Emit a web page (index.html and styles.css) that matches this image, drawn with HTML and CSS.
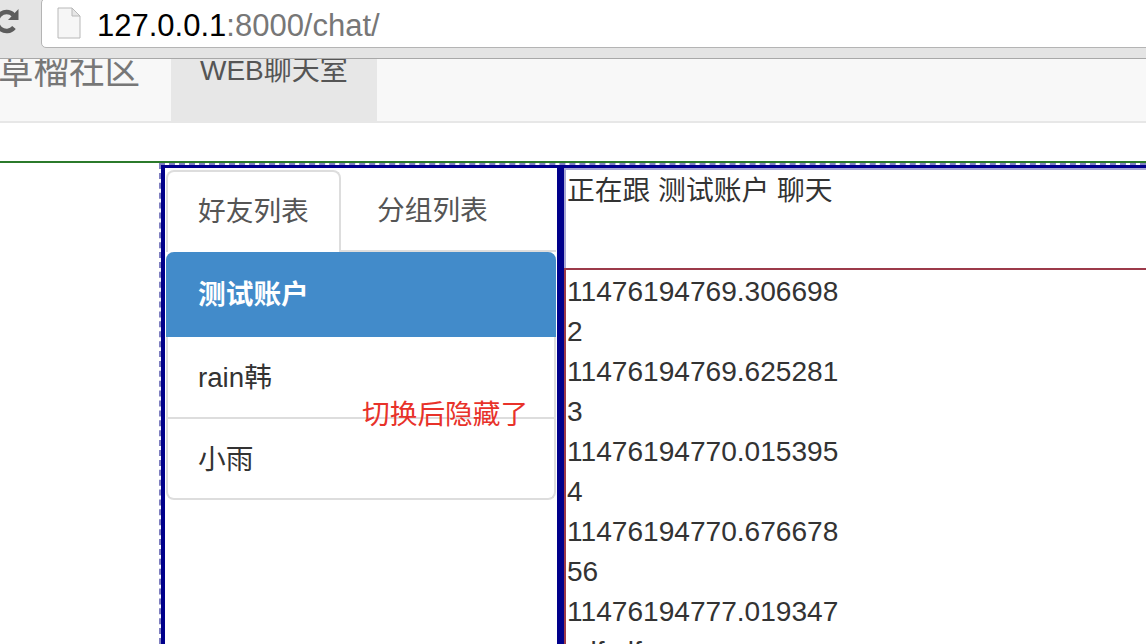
FILE: index.html
```html
<!DOCTYPE html>
<html lang="zh">
<head>
<meta charset="utf-8">
<title>chat</title>
<link rel="stylesheet" href="styles.css">
</head>
<body>
<div class="toolbar">
  <svg class="reload" width="24" height="30" viewBox="0 0 24 30"><path d="M17 21.5a9.5 9.5 0 1 1-.5-12.500" fill="none" stroke="#5c5c5c" stroke-width="4.500"/><path d="M11 14h10.500V3z" fill="#5c5c5c"/></svg>
  <div class="omnibox">
    <svg class="page" width="24" height="32" viewBox="0 0 24 32"><path d="M1 1h14l8 8v22H1z" fill="#f6f6f6" stroke="#b8b8b8"/><path d="M15 1v8h8z" fill="#e6e6e6" stroke="#b8b8b8"/></svg>
    <div class="url"><span class="host">127.0.0.1</span><span class="path">:8000/chat/</span></div>
  </div>
</div>
<nav class="navbar">
  <div class="brand">草榴社区</div>
  <div class="navitem">WEB聊天室</div>
</nav>
<div class="rule"></div>
<main class="chat">
  <aside class="left">
    <div class="tabs">
      <div class="tab active">好友列表</div>
      <div class="tab">分组列表</div>
    </div>
    <ul class="list">
      <li class="row current">测试账户</li>
      <li class="row">rain韩</li>
      <li class="row">小雨</li>
    </ul>
    <div class="note">切换后隐藏了</div>
  </aside>
  <section class="right">
    <div class="head">正在跟 测试账户 聊天</div>
    <div class="msgs">
      <div>11476194769.306698</div>
      <div>2</div>
      <div>11476194769.625281</div>
      <div>3</div>
      <div>11476194770.015395</div>
      <div>4</div>
      <div>11476194770.676678</div>
      <div>56</div>
      <div>11476194777.019347</div>
      <div>mlfmlf</div>
    </div>
  </section>
</main>
</body>
</html>
```
FILE: styles.css
```css
* { box-sizing: border-box; }
html, body { margin: 0; height: 644px; overflow: hidden; background: #fff; }
body { font-family: "Liberation Sans", "Noto Sans CJK SC", sans-serif; color: #333; }
.toolbar { height: 59px; background: #e4e4e4; border-bottom: 1px solid #a8a8a8; display: flex; align-items: flex-start; overflow: hidden; position: relative; z-index: 1; }
.reload { margin: 6px 20px 0 -3px; flex: none; }
.omnibox { width: 1200px; height: 50px; margin-top: -2px; background: #fff; border: 1px solid #b4b4b4; border-radius: 5px; display: flex; align-items: center; padding-left: 15px; font-size: 31px; flex: none; }
.page { margin-right: 16px; flex: none; }
.url { padding-top: 6px; }
.host { color: #000; }
.path { color: #777; }
.navbar { height: 64px; background: #f8f8f8; border-bottom: 2px solid #e7e7e7; display: flex; }
.brand { font-size: 35.500px; color: #777; margin-left: -2px; width: 173px; line-height: 26px; }
.navitem { width: 206px; background: #e7e7e7; color: #555; font-size: 28px; padding-left: 29px; line-height: 24px; }
.rule { height: 40px; border-bottom: 2px solid #2b7a2b; }
.chat { margin-left: 159px; height: 481px; border-top: 2px dashed #8080c0; border-left: 2px dashed #8080c0; display: flex; position: relative; }
.left { width: 403px; height: 100%; border: solid #00008b; border-width: 3px 7px 0 4px; padding: 2px 1px 0; flex: none; position: relative; }
.tabs { display: flex; height: 82px; border-bottom: 2px solid #ddd; }
.tab { width: 175px; font-size: 27.700px; line-height: 80px; padding-left: 30px; color: #555; }
.tab.active { border: 2px solid #ddd; border-bottom: 0; border-radius: 8px 8px 0 0; background: #fff; height: 82px; position: relative; }
.tab + .tab { width: 185px; padding-left: 36px; line-height: 82px; }
.list { list-style: none; margin: 0; padding: 0; border: 2px solid #ddd; border-top: 0; border-radius: 8px; }
.row { height: 81px; font-size: 27.700px; line-height: 81px; padding-left: 30px; border-top: 2px solid #ddd; }
.row.current { height: 85px; margin: 0 -2px; padding-left: 32px; background: #428bca; border: 0; color: #fff; font-weight: 700; border-radius: 8px 8px 0 0; line-height: 85px; }
.row.current + .row { border-top: 0; height: 80px; line-height: 81px; }
.note { position: absolute; left: 197px; top: 224px; font-size: 27.700px; color: #e8322a; }
.right { flex: 1; border-top: 3px solid #00008b; }
.head { height: 100px; font-size: 27.800px; line-height: 42px; padding-left: 1px; border: solid #a8a8d4; border-width: 2px 0 0 2px; }
.msgs { border: solid #9c3a4a; border-width: 2px 0 0 2px; font-size: 28.100px; line-height: 40px; padding: 2px 0 0 1px; }
```
